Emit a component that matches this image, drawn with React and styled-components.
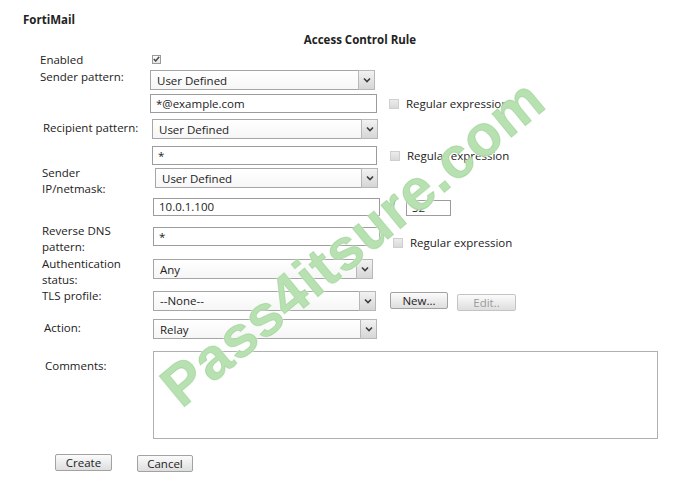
import styled, { createGlobalStyle } from 'styled-components'

const GlobalStyle = createGlobalStyle`
  html, body {
    margin: 0;
    padding: 0;
    background: #fff;
  }
`

const Page = styled.div`
  position: relative;
  width: 690px;
  height: 487px;
  overflow: hidden;
  background: #fff;
  color: #222;
  font-family: "Open Sans", "Liberation Sans", sans-serif;
  font-size: 11.5px;
`

const Brand = styled.div`
  padding: 12px 0 0 23px;
  font-weight: 700;
  line-height: 16px;
`

const Title = styled.div`
  padding-left: 30px;
  margin-top: 4px;
  text-align: center;
  font-weight: 700;
  line-height: 16px;
`

const Form = styled.div`
  display: flex;
  flex-direction: column;
`

const Row = styled.div`
  display: grid;
  grid-template-columns: 150px 1fr;
  grid-template-rows: ${p => p.$h}px;
  height: ${p => p.$h}px;
  margin-top: ${p => p.$mt}px;
`

const Label = styled.div`
  padding-left: ${p => p.$x || 40}px;
  margin-top: ${p => p.$dy || 0}px;
  line-height: 16px;
  white-space: nowrap;
`

const Field = styled.div`
  display: flex;
  align-items: center;
  height: ${p => p.$h}px;
  padding-left: ${p => p.$x || 0}px;
`

const SelectWrap = styled.div`
  display: flex;
  width: ${p => p.$w || 225}px;
  height: ${p => p.$h || 20}px;
`

const SelectValue = styled.div`
  flex: 1;
  display: flex;
  align-items: center;
  padding-left: 6px;
  border: 1px solid #a6a6a6;
  border-right: none;
  background: linear-gradient(#fff, #f6f6f6);
`

const SelectArrow = styled.div`
  width: 15px;
  display: flex;
  align-items: center;
  justify-content: center;
  border: 1px solid #b8b8b8;
  background: linear-gradient(#f2f2f2, #d6d6d6);
`

const TextBox = styled.div`
  box-sizing: border-box;
  display: flex;
  align-items: center;
  width: ${p => p.$w || 227}px;
  height: ${p => p.$h || 19}px;
  margin-top: ${p => p.$mt || 0}px;
  padding-left: 5px;
  border: 1px solid #9c9c9c;
  background: #fff;
`

const Check = styled.div`
  box-sizing: border-box;
  width: ${p => p.$size || 10}px;
  height: ${p => p.$size || 10}px;
  margin-left: ${p => p.$ml || 0}px;
  margin-top: ${p => p.$mt || 0}px;
  display: flex;
  align-items: center;
  justify-content: center;
  border: 1px solid ${p => (p.$checked ? '#9a9a9a' : '#cfcfcf')};
  background: ${p => (p.$checked ? 'linear-gradient(#fdfdfd, #e6e6e6)' : 'linear-gradient(#ececec, #d9d9d9)')};
`

const Hint = styled.span`
  margin-left: 7px;
  margin-top: ${p => p.$mt || 0}px;
  white-space: nowrap;
`

const Slash = styled.span`
  width: 26px;
  text-align: center;
  font-size: 20px;
  line-height: 18px;
  color: #2f3f2f;
  font-family: "Liberation Sans", sans-serif;
`

const Button = styled.div`
  box-sizing: border-box;
  display: flex;
  align-items: center;
  justify-content: center;
  width: ${p => p.$w}px;
  height: 17px;
  margin-left: ${p => p.$ml || 0}px;
  margin-top: ${p => p.$mt || 0}px;
  border: 1px solid ${p => (p.$disabled ? '#c4c4c4' : '#a2a2a2')};
  border-radius: 2px;
  background: linear-gradient(#fbfbfb, #dedede);
  color: ${p => (p.$disabled ? '#9a9a9a' : '#222')};
  font-size: 11.5px;
`

const TextArea = styled.div`
  box-sizing: border-box;
  width: 505px;
  height: 88px;
  border: 1px solid #b0b0b0;
  background: #fff;
`

const Actions = styled.div`
  display: flex;
  margin-top: 15px;
  padding-left: 55px;
  gap: 25px;
`

const Watermark = styled.div`
  position: absolute;
  left: 352px;
  top: 242px;
  transform: translate(-50%, -50%) rotate(-39.5deg);
  white-space: nowrap;
  pointer-events: none;
  font-family: "Liberation Sans", sans-serif;
  font-weight: 700;
  font-size: 58px;
  letter-spacing: 1px;
  color: rgba(140, 206, 130, 0.62);
  -webkit-text-stroke: 1px rgba(110, 186, 100, 0.3);
  text-shadow: 0 0 2px #fff, 0 0 2px #fff;
`

const Chevron = () => (
  <svg width="8" height="6" viewBox="0 0 8 6">
    <path d="M1 1.5 L4 4.5 L7 1.5" fill="none" stroke="#3c3c3c" strokeWidth="1.6" />
  </svg>
)

const Tick = () => (
  <svg width="7" height="6" viewBox="0 0 7 6">
    <path d="M0.8 3 L2.7 5 L6.2 0.8" fill="none" stroke="#444" strokeWidth="1.4" />
  </svg>
)

const Select = ({ value, w }) => (
  <SelectWrap $w={w}>
    <SelectValue>{value}</SelectValue>
    <SelectArrow>
      <Chevron />
    </SelectArrow>
  </SelectWrap>
)

// one form line: label column + field column, fixed track height
const Line = ({ h, mt, label, lx, dy, fx, children }) => (
  <Row $h={h} $mt={mt}>
    <Label $x={lx} $dy={dy}>{label}</Label>
    <Field $h={h} $x={fx}>{children}</Field>
  </Row>
)

export default function App() {
  return (
    <Page>
      <GlobalStyle />
      <Brand>FortiMail</Brand>
      <Title>Access Control Rule</Title>
      <Form>
        <Line h={12} mt={5} dy={-1} label="Enabled" fx={2}>
          <Check $checked $size={9}>
            <Tick />
          </Check>
        </Line>
        <Line h={20} mt={5} dy={-1} label="Sender pattern:">
          <Select value="User Defined" w={225} />
        </Line>
        <Line h={19} mt={4}>
          <TextBox $w={227}>*@example.com</TextBox>
          <Check $ml={12} />
          <Hint>Regular expression</Hint>
        </Line>
        <Line h={20} mt={6} lx={43} dy={1} label="Recipient pattern:" fx={2}>
          <Select value="User Defined" w={226} />
        </Line>
        <Line h={19} mt={7} fx={2}>
          <TextBox $w={225}>*</TextBox>
          <Check $ml={13} />
          <Hint>Regular expression</Hint>
        </Line>
        <Line
          h={20}
          mt={3}
          lx={42}
          dy={-3}
          fx={5}
          label={
            <>
              Sender
              <br />
              IP/netmask:
            </>
          }
        >
          <Select value="User Defined" w={223} />
        </Line>
        <Line h={19} mt={9} fx={3}>
          <TextBox $w={227} $h={18}>10.0.1.100</TextBox>
          <Slash>/</Slash>
          <TextBox $w={45} $h={16} $mt={2}>32</TextBox>
        </Line>
        <Line
          h={19}
          mt={11}
          lx={42}
          dy={-4}
          fx={3}
          label={
            <>
              Reverse DNS
              <br />
              pattern:
            </>
          }
        >
          <TextBox $w={227}>*</TextBox>
          <Check $ml={13} $mt={12} />
          <Hint $mt={12}>Regular expression</Hint>
        </Line>
        <Line
          h={20}
          mt={13}
          lx={42}
          dy={-3}
          fx={3}
          label={
            <>
              Authentication
              <br />
              status:
            </>
          }
        >
          <Select value="Any" w={220} />
        </Line>
        <Line h={21} mt={11} lx={42} dy={-2} fx={3} label="TLS profile:">
          <Select value="--None--" w={223} />
          <Button $w={58} $ml={14}>New...</Button>
          <Button $w={59} $ml={9} $mt={4} $disabled>Edit..</Button>
        </Line>
        <Line h={18} mt={9} lx={44} fx={3} label="Action:">
          <Select value="Relay" w={224} />
        </Line>
        <Line h={88} mt={13} lx={45} dy={7} fx={3} label="Comments:">
          <TextArea />
        </Line>
      </Form>
      <Actions>
        <Button $w={57}>Create</Button>
        <Button $w={56} $mt={1}>Cancel</Button>
      </Actions>
      <Watermark>Pass4itsure.com</Watermark>
    </Page>
  )
}
